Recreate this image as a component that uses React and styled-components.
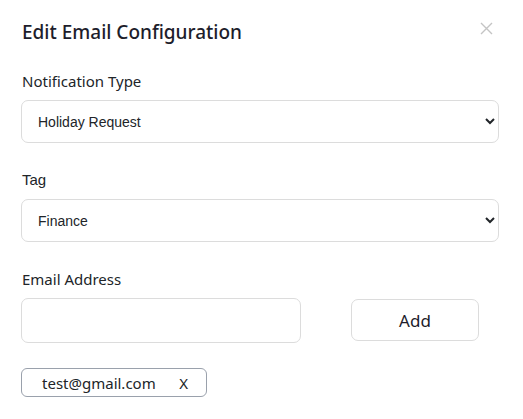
import React from "react";
import styled, { createGlobalStyle } from "styled-components";

const Global = createGlobalStyle`
  html, body { margin: 0; padding: 0; background: #fff; }
  body { font-family: "Noto Sans", "Open Sans", sans-serif; color: #212529; }
`;

const Modal = styled.div`
  width: 523px;
  box-sizing: border-box;
  padding: 18px 25px 20px 21px;
`;

const Header = styled.div`
  display: flex;
  align-items: flex-start;
  justify-content: space-between;
  height: 52px;
`;

const Title = styled.h2`
  margin: 0;
  font-size: 19px;
  font-weight: 500;
  line-height: 28px;
  color: #1d1d2b;
  padding-left: 1px;
`;

const Close = styled.button`
  border: 0;
  background: none;
  padding: 0;
  margin: 2px 4px 0 0;
  width: 16px;
  height: 16px;
  cursor: pointer;
  display: flex;
  align-items: center;
  justify-content: center;
`;

const Field = styled.div`
  display: flex;
  flex-direction: column;
  margin-top: ${(p) => p.$mt || 0}px;
`;

const Label = styled.label`
  font-family: ${(p) => (p.$arial ? '"Liberation Sans", Arial, sans-serif' : '"Noto Sans", sans-serif')};
  font-size: 15px;
  line-height: 22px;
  color: #212529;
  padding-left: 1px;
  margin-bottom: 8px;
`;

const Select = styled.select`
  width: 478px;
  height: 43px;
  box-sizing: border-box;
  border: 1px solid #dcdcdc;
  border-radius: 7px;
  background: #fff;
  padding: 0 8px 0 12px;
  font-family: "Liberation Sans", Arial, sans-serif;
  font-size: 14px;
  color: #212529;
  outline: none;
`;

const Row = styled.div`
  display: flex;
  align-items: flex-start;
  gap: 50px;
`;

const Input = styled.input`
  width: 280px;
  height: 45px;
  box-sizing: border-box;
  border: 1px solid #dcdcdc;
  border-radius: 7px;
  padding: 0 12px;
  outline: none;
`;

const AddButton = styled.button`
  width: 128px;
  height: 42px;
  margin-top: 1px;
  box-sizing: border-box;
  border: 1px solid #dcdcdc;
  border-radius: 7px;
  background: #fff;
  font-family: "Noto Sans", sans-serif;
  font-size: 17px;
  color: #1d1d2b;
  cursor: pointer;
`;

const Chips = styled.div`
  display: flex;
  margin-top: 25px;
`;

const Chip = styled.div`
  display: flex;
  align-items: center;
  height: 29px;
  width: 186px;
  box-sizing: border-box;
  border: 1px solid #9aa1ac;
  border-radius: 6px;
  padding: 0 18px 0 20px;
  justify-content: space-between;
  font-size: 15px;
  color: #212529;
`;

const ChipRemove = styled.span`
  font-size: 15px;
  cursor: pointer;
`;

export default function App() {
  return (
    <>
      <Global />
      <Modal>
        <Header>
          <Title>Edit Email Configuration</Title>
          <Close aria-label="Close">
            <svg width="13" height="13" viewBox="0 0 13 13">
              <path d="M1 1L12 12M12 1L1 12" stroke="#c4c4c4" strokeWidth="1.4" />
            </svg>
          </Close>
        </Header>
        <Field>
          <Label>Notification Type</Label>
          <Select defaultValue="holiday">
            <option value="holiday">Holiday Request</option>
          </Select>
        </Field>
        <Field $mt={26}>
          <Label $arial>Tag</Label>
          <Select defaultValue="finance">
            <option value="finance">Finance</option>
          </Select>
        </Field>
        <Field $mt={26}>
          <Label>Email Address</Label>
          <Row>
            <Input type="text" />
            <AddButton>Add</AddButton>
          </Row>
        </Field>
        <Chips>
          <Chip>
            <span>test@gmail.com</span>
            <ChipRemove>X</ChipRemove>
          </Chip>
        </Chips>
      </Modal>
    </>
  );
}
